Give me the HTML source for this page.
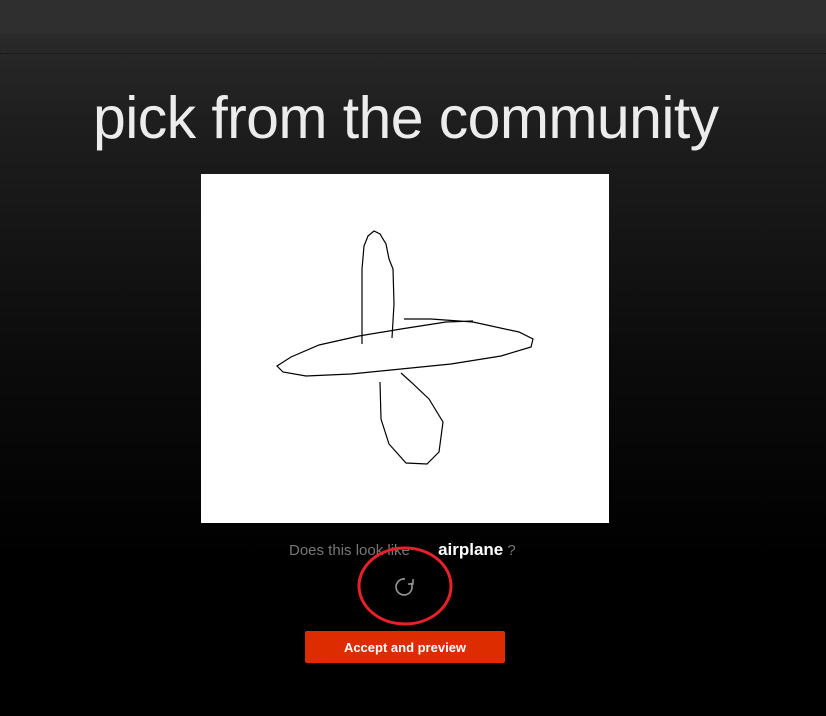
<!DOCTYPE html>
<html><head><style>
body{margin:0;width:826px;height:716px;overflow:hidden;font-family:"Liberation Sans",sans-serif;background:linear-gradient(#2a2a2a 34px,#1e1e1e 120px,#0c0c0c 350px,#000 560px);position:relative}
.top{position:absolute;left:0;top:0;width:826px;height:34px;background:#2f2f2f}
.dot{position:absolute;left:0;top:53px;width:826px;border-top:1px dotted #111}
h1{position:absolute;left:93px;top:84px;margin:0;font-size:59px;font-weight:normal;color:#ececec;letter-spacing:-0.6px;white-space:nowrap}
.cv{position:absolute;left:201px;top:174px;width:408px;height:349px;background:#fff}
.q{position:absolute;left:289px;top:540px;font-size:15px;color:#777;white-space:nowrap}
.q b{color:#fff;font-size:17px;margin-left:24px}
.btn{position:absolute;left:305px;top:631px;width:200px;height:32px;background:#dd2c00;color:#fff;font-size:13px;font-weight:bold;text-align:center;line-height:34px;border-radius:2px}
</style></head><body>
<div class="top"></div><div class="dot"></div>
<h1>pick from the community</h1>
<div class="cv"><svg width="408" height="349" fill="none" stroke="#000" stroke-width="1.2">
<path d="M161 170 L161 95 L163 72 L167 62 L173 57 L179 60 L185 70 L188 85 L192 95 L193 130 L191 164"/>
<path d="M203 145 L230 145 L272 148 L318 158 L332 165 L330 173 L300 182 L250 190 L200 195 L150 200 L105 202 L82 198 L76 192 L90 183 L118 171 L158 162 L200 155 L245 148 L272 147"/>
<path d="M179 208 L180 245 L188 270 L205 289 L226 290 L238 278 L242 248 L228 225 L210 208 L200 199"/>
</svg></div>
<div class="q">Does this look like <b>airplane</b> ?</div>
<svg style="position:absolute;left:355px;top:545px" width="100" height="84"><ellipse cx="50" cy="41" rx="46" ry="38" fill="none" stroke="#e8202a" stroke-width="3"/><path d="M56 38 A8 8 0 1 1 50 34" fill="none" stroke="#999" stroke-width="1.6"/><path d="M53 39 L58 39 L58 34" fill="none" stroke="#999" stroke-width="1.5"/></svg>
<div class="btn">Accept and preview</div>
</body></html>
